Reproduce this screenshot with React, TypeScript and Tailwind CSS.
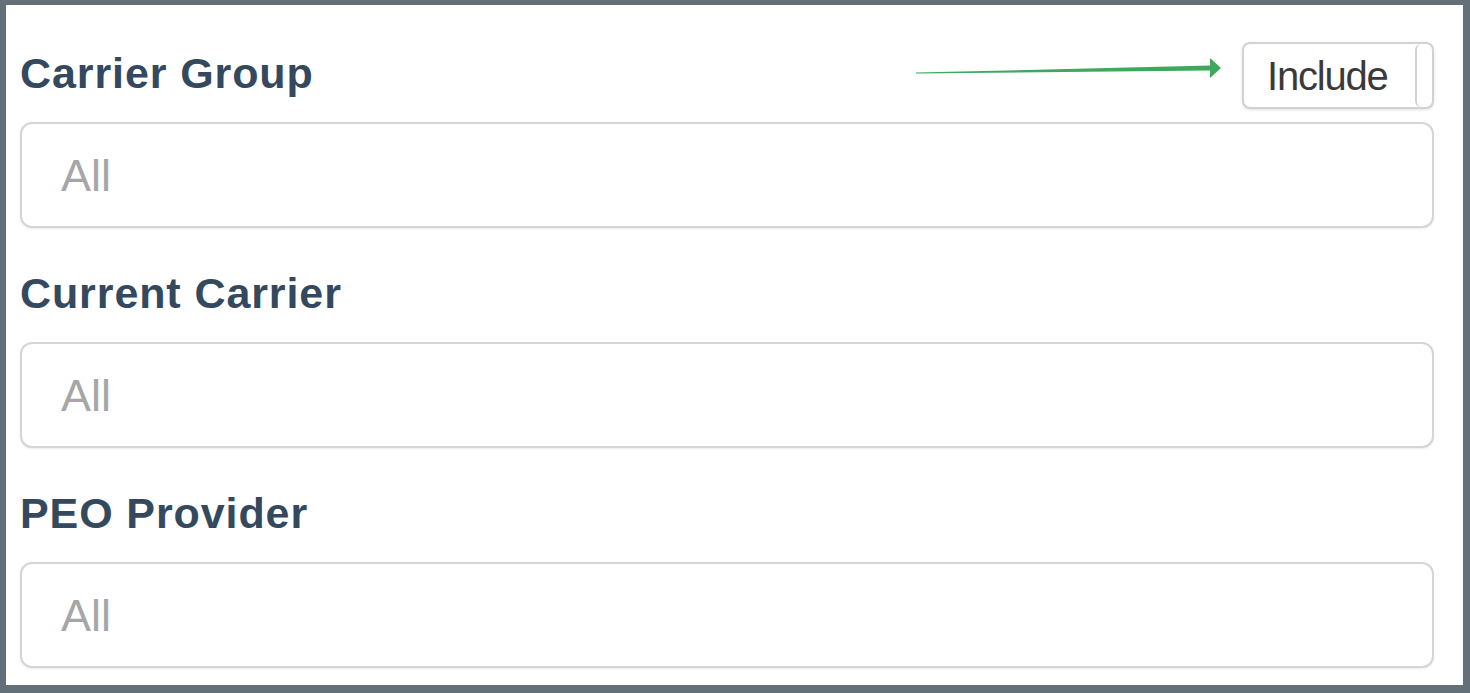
import React from "react";

const labelCls =
  "block text-[43px] leading-[48px] font-bold tracking-[0.9px] text-[#34495e] [font-family:'Liberation_Sans',Arial,sans-serif]";

function Field({ children }: { children?: React.ReactNode }) {
  return (
    <div className="h-[106px] w-full rounded-[12px] border-2 border-[#d5d5d5] bg-white shadow-[0_1px_2px_rgba(0,0,0,0.08)] flex items-center pl-[39px]">
      <span className="text-[45px] leading-[45px] text-[#a6a6a8] [font-family:'Liberation_Sans',Arial,sans-serif]">
        All
      </span>
      {children}
    </div>
  );
}

export default function App() {
  return (
    <div className="relative w-[1470px] h-[693px] bg-[#636f79] pt-[5px] pl-[6px] pr-[7px] pb-[8px]">
      <div className="h-full w-full bg-white pl-[14px] pr-[29px] pt-[37px]">
        <div className="flex items-start justify-between h-[67px]">
          <span className={`${labelCls} mt-[7px]`}>Carrier Group</span>
          <div className="flex h-[67px] w-[192px] rounded-[8px] border-2 border-[#d2d2d2] bg-white shadow-[0_1px_3px_rgba(0,0,0,0.12)] overflow-hidden">
            <div className="w-[171px] flex items-center pl-[23px]">
              <span className="text-[40px] leading-[40px] tracking-[-1.2px] text-[#3a3a3a] [font-family:'Liberation_Sans',Arial,sans-serif]">
                Include
              </span>
            </div>
            <div className="flex-1 border-l-2 border-[#d2d2d2] rounded-l-[6px]" />
          </div>
        </div>
        <div className="mt-[13px]">
          <Field />
        </div>

        <span className={`${labelCls} mt-[41px]`}>Current Carrier</span>
        <div className="mt-[25px]">
          <Field />
        </div>

        <span className={`${labelCls} mt-[41px]`}>PEO Provider</span>
        <div className="mt-[25px]">
          <Field />
        </div>
      </div>

      <svg
        className="absolute left-0 top-0 pointer-events-none"
        width="1470"
        height="693"
        viewBox="0 0 1470 693"
      >
        <polygon
          points="916,72.6 1210,65.5 1210,58 1221,68 1210,78 1210,70.5 916,73.4"
          fill="#3ea85c"
        />
      </svg>
    </div>
  );
}
